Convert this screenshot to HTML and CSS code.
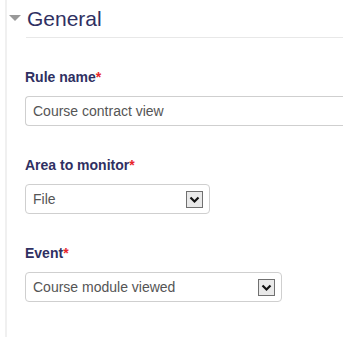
FILE: index.html
```html
<!DOCTYPE html>
<html lang="en">

<head>
    <meta charset="UTF-8">
    <meta name="viewport" content="width=device-width, initial-scale=1.0">
    <title>Rule settings</title>
    <link rel="stylesheet" href="styles.css">
</head>

<body>
    <div class="fieldset">
        <!-- Collapsible section header -->
        <div class="legend">
            <span class="toggle"></span>
            <h2>General</h2>
        </div>

        <div class="fields">
            <div class="form-item">
                <label for="rulename">Rule name<span class="req">*</span></label>
                <div class="text-input" id="rulename">Course contract view</div>
            </div>

            <div class="form-item">
                <label>Area to monitor<span class="req">*</span></label>
                <div class="select select-short">
                    <span>File</span>
                    <span class="arrow">
                        <svg width="15" height="15" viewBox="0 0 15 15">
                            <path d="M3.5 5.5 L7.5 9.5 L11.5 5.5" fill="none" stroke="#111" stroke-width="2.2"/>
                        </svg>
                    </span>
                </div>
            </div>

            <div class="form-item">
                <label>Event<span class="req">*</span></label>
                <div class="select select-long">
                    <span>Course module viewed</span>
                    <span class="arrow">
                        <svg width="15" height="15" viewBox="0 0 15 15">
                            <path d="M3.5 5.5 L7.5 9.5 L11.5 5.5" fill="none" stroke="#111" stroke-width="2.2"/>
                        </svg>
                    </span>
                </div>
            </div>
        </div>
    </div>
</body>

</html>
```

FILE: styles.css
```css
body {
    margin: 0;
    font-family: "Liberation Sans", Arial, sans-serif;
    background: #fff;
    overflow: hidden;
}

.fieldset {
    margin-left: 5px;
    border-left: 2px solid #f0f0f0; /* faint section rule */
    height: 337px;
    overflow: hidden;
}

.legend {
    display: flex;
    align-items: flex-start;
}

.toggle {
    width: 0;
    height: 0;
    margin: 15px 5px 0 2px;
    border-left: 6px solid transparent;
    border-right: 6px solid transparent;
    border-top: 6px solid #999;
}

h2 {
    flex: 1;
    margin: 0;
    padding: 5px 0 4px 1px;
    font-size: 21px;
    line-height: 28px;
    font-weight: normal;
    color: #2f3062;
    border-bottom: 1px solid #e8e8e8;
}

.fields {
    padding: 29px 0 0 18px;
}

.form-item {
    margin-bottom: 29px;
}

label {
    display: block;
    font-size: 14px;
    line-height: 20px;
    font-weight: bold;
    color: #2f3062;
    margin-bottom: 9px;
}

.req {
    color: #e8262b;
}

.text-input,
.select {
    box-sizing: border-box;
    height: 30px;
    border: 1px solid #cfcfcf;
    border-radius: 4px;
    padding: 0 7px;
    font-size: 14px;
    line-height: 28px;
    color: #555;
    background: #fff;
}

.text-input {
    width: 330px;
    border-right: none;
    border-radius: 4px 0 0 4px;
}

.select {
    display: flex;
    justify-content: space-between;
    align-items: center;
    padding-right: 6px;
}

.select-short {
    width: 185px;
}

.select-long {
    width: 257px;
}

.arrow {
    box-sizing: border-box;
    width: 17px;
    height: 17px;
    border: 1px solid #707070;
    background: #e9e9e9;
    display: flex;
    align-items: center;
    justify-content: center;
}

.arrow svg {
    display: block;
}
```
